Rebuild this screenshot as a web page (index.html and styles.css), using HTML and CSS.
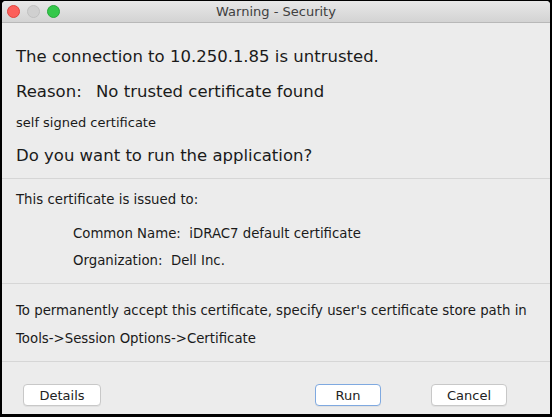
FILE: index.html
```html
<!DOCTYPE html>
<html>
<head>
<meta charset="utf-8">
<link rel="stylesheet" href="styles.css">
</head>
<body>
<div class="window">
  <div class="titlebar">
    <div class="lights">
      <span class="light red"></span>
      <span class="light gray"></span>
      <span class="light green"></span>
    </div>
    <div class="title">Warning - Security</div>
  </div>
  <div class="content">
    <section class="sec top">
      <p class="big l1">The connection to 10.250.1.85 is untrusted.</p>
      <p class="big l2"><span class="reason">Reason:</span>No trusted certificate found</p>
      <p class="small l3">self signed certificate</p>
      <p class="big l4">Do you want to run the application?</p>
    </section>
    <section class="sec issued">
      <p class="mid m1">This certificate is issued to:</p>
      <p class="mid m2 indent">Common Name:&nbsp; iDRAC7 default certificate</p>
      <p class="mid m3 indent">Organization:&nbsp; Dell Inc.</p>
    </section>
    <section class="sec perm">
      <p class="mid p1">To permanently accept this certificate, specify user's certificate store path in</p>
      <p class="mid p2">Tools-&gt;Session Options-&gt;Certificate</p>
    </section>
    <div class="buttons">
      <button class="btn details">Details</button>
      <div class="spacer"></div>
      <button class="btn run">Run</button>
      <button class="btn cancel">Cancel</button>
    </div>
  </div>
</div>
</body>
</html>
```
FILE: styles.css
```css
* { box-sizing: border-box; }
html, body { margin: 0; padding: 0; background: #000; }
body { width: 552px; height: 417px; overflow: hidden; font-family: "DejaVu Sans", "Liberation Sans", sans-serif; color: #1a1a1a; }
.window {
  margin: 1px 2px 0 2px;
  width: 548px;
  height: 413px;
  background: #ececec;
  display: flex;
  flex-direction: column;
  border-radius: 4px 4px 0 0;
  overflow: hidden;
}
.titlebar {
  height: 22px;
  flex: none;
  background: linear-gradient(#e8e8e8, #d3d3d3);
  border-bottom: 1px solid #b8b8b8;
  display: flex;
  align-items: center;
  position: relative;
}
.lights { display: flex; gap: 7px; padding-left: 5px; }
.light { width: 13px; height: 13px; border-radius: 50%; display: block; }
.red { background: #fc605b; border: 1px solid #e0443e; }
.gray { background: #d0d0d0; border: 1px solid #c0c0c0; }
.green { background: #34c84a; border: 1px solid #27a83a; }
.title {
  position: absolute; left: 0; right: 0; top: 0; height: 22px;
  text-align: center; font-size: 13px; line-height: 22px; color: #404040;
}
.content { flex: 1; display: flex; flex-direction: column; }
p { margin: 0; white-space: nowrap; }
.sec { padding-left: 14px; border-bottom: 1px solid #d6d6d6; }
.top { height: 156px; padding-top: 24px; }
.big { font-size: 16.5px; line-height: 20px; }
.small { font-size: 13px; line-height: 16px; }
.mid { font-size: 13.3px; line-height: 17px; }
.l2 { margin-top: 15px; }
.reason { display: inline-block; width: 80px; }
.l3 { margin-top: 13px; }
.l4 { margin-top: 15px; }
.issued { height: 105px; padding-top: 12px; }
.indent { padding-left: 57px; }
.m2 { margin-top: 17px; }
.m3 { margin-top: 10px; }
.perm { height: 78px; padding-top: 18px; }
.p2 { margin-top: 11px; }
.buttons { display: flex; align-items: center; padding: 22px 0 0 21px; }
.spacer { flex: 1; }
.btn {
  font-family: inherit; font-size: 13px; color: #222;
  height: 22px; padding: 0; background: #fff;
  border: 1px solid #c8c8c8; border-radius: 4px;
  box-shadow: 0 1px 0 rgba(0,0,0,0.05);
}
.details { width: 78px; }
.run { width: 66px; border-color: #7fa9e0; }
.cancel { width: 76px; margin-left: 50px; margin-right: 43px; }
```
